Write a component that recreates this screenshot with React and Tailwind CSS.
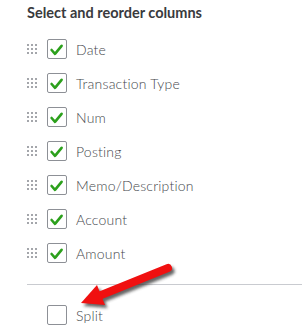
import React from 'react'

const columns = [
  { name: 'Date', checked: true },
  { name: 'Transaction Type', checked: true },
  { name: 'Num', checked: true },
  { name: 'Posting', checked: true },
  { name: 'Memo/Description', checked: true },
  { name: 'Account', checked: true },
  { name: 'Amount', checked: true },
]

const Grip = () => (
  <svg width="10" height="10" viewBox="0 0 10 10" className="shrink-0">
    {[0, 4, 8].map(y =>
      [0, 4, 8].map(x => (
        <rect key={`${x}-${y}`} x={x} y={y} width="2" height="2" fill="#a4a6ab" />
      ))
    )}
  </svg>
)

const Checkbox = ({ checked }) => (
  <div className="w-[20px] h-[20px] border border-[#8d9096] rounded-[2px] bg-white shrink-0 flex items-center justify-center">
    {checked && (
      <svg width="18" height="18" viewBox="0 0 18 18">
        <path d="M3.6 10 L7 13.8 L13.6 5.8" fill="none" stroke="#2ca01c" strokeWidth="2.6" strokeLinecap="round" strokeLinejoin="round" />
      </svg>
    )}
  </div>
)

const Row = ({ name, checked, grip = true }) => (
  <div className="h-[34px] flex items-center">
    <div className="w-[20px] flex items-center">{grip && <Grip />}</div>
    <Checkbox checked={checked} />
    <span className="ml-[9px] text-[14px] font-light tracking-[0.2px] text-[#45474c] font-['Lato',sans-serif]">{name}</span>
  </div>
)

export default function App() {
  return (
    <div className="relative w-[302px] h-[331px] bg-white overflow-hidden font-['Lato',sans-serif]">
      <div className="pl-[27px]">
        <div className="h-[32px] pt-[4px] text-[14.5px] font-bold text-[#393a3d] leading-[18px]">
          Select and reorder columns
        </div>
        {columns.map(c => (
          <Row key={c.name} name={c.name} checked={c.checked} />
        ))}
        <div className="mt-[14px] border-t border-[#c9cbd0]" />
        <div className="mt-[13px]">
          <Row name="Split" checked={false} grip={false} />
        </div>
      </div>

      {/* red arrow callout */}
      <svg className="absolute inset-0 pointer-events-none" width="302" height="331" viewBox="0 0 302 331">
        <defs>
          <filter id="sh" x="-20%" y="-20%" width="140%" height="140%">
            <feGaussianBlur stdDeviation="1.5" />
          </filter>
        </defs>
        <g transform="translate(2.5 3)" fill="#333" opacity="0.75" filter="url(#sh)">
          <line x1="168" y1="268" x2="100" y2="295.5" stroke="#333" strokeWidth="8" strokeLinecap="round" />
          <polygon points="81,303 105,305 97,285" />
        </g>
        <line x1="168" y1="268" x2="100" y2="295.5" stroke="#f01010" strokeWidth="8" strokeLinecap="round" />
        <polygon points="81,303 105,305 97,285" fill="#f01010" />
      </svg>
    </div>
  )
}
